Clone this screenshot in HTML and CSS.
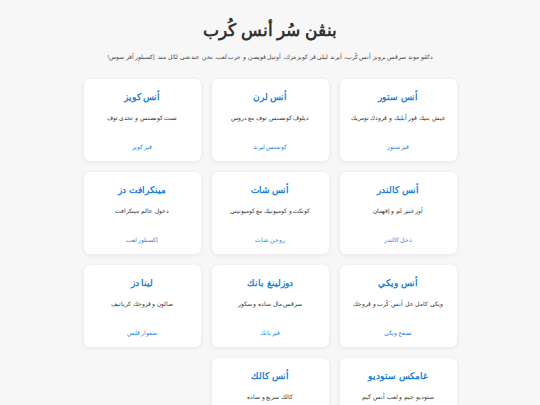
FILE: index.html
```html
<!DOCTYPE html>
<html lang="ms" dir="rtl">
<head>
<meta charset="utf-8">
<link rel="stylesheet" href="styles.css">
</head>
<body>
<div class="page">
  <h1 class="title">بنڤن سُر أنس كُرب</h1>
  <p class="subtitle">دكڤو موند سرڤس بروبز أنس كُرب، أيرند ليلي ڤر كويز مَزك، أوتيل ڤويصن و جرب لَعب. نحن عند شي لكل مند. إكسبلور أقر سوس!</p>
  <div class="grid">
    <div class="card"><h2 class="card-title">أنس ستور</h2><p class="card-desc">عيش بنيك ڤور أبليك و ڤرودك نومريك</p><a class="card-link" href="#">قيز ستور</a></div>
    <div class="card"><h2 class="card-title">أنس لرن</h2><p class="card-desc">ديلوڤ كونصنس توف مع دروس</p><a class="card-link" href="#">كونمتس ليرند</a></div>
    <div class="card"><h2 class="card-title">أنس كويز</h2><p class="card-desc">تست كونصنس و تحدي توف</p><a class="card-link" href="#">قيز كويز</a></div>
    <div class="card"><h2 class="card-title">أنس كالندر</h2><p class="card-desc">أور غنيز لَم و إقهمان</p><a class="card-link" href="#">دخل كالندر</a></div>
    <div class="card"><h2 class="card-title">أنس شات</h2><p class="card-desc">كونكت و كوميونيك مع كوميونيتي</p><a class="card-link" href="#">روجن شات</a></div>
    <div class="card"><h2 class="card-title">مينكرافت دز</h2><p class="card-desc">دخول عالم مينكرافت</p><a class="card-link" href="#">إكسبلور لعب</a></div>
    <div class="card"><h2 class="card-title">أنس ويكي</h2><p class="card-desc">ويكي كامل عل أنس كُرب و ڤروجك</p><a class="card-link" href="#">تصفح ويكي</a></div>
    <div class="card"><h2 class="card-title">دوزلينغ بانك</h2><p class="card-desc">سرڤس مال ساده و سكور</p><a class="card-link" href="#">قيز بانك</a></div>
    <div class="card"><h2 class="card-title">لينا دز</h2><p class="card-desc">صالون و ڤروجك كرياتيف</p><a class="card-link" href="#">صفوار ڤلس</a></div>
    <div class="card"><h2 class="card-title">غامكس ستوديو</h2><p class="card-desc">ستوديو جيم و لعب أنس گيم</p><a class="card-link" href="#">قيز ستوديو</a></div>
    <div class="card"><h2 class="card-title">أنس كالك</h2><p class="card-desc">كالك سريع و ساده</p><a class="card-link" href="#">قيز كالك</a></div>
  </div>
</div>
</body>
</html>
```
FILE: styles.css
```css
html, body {
  margin: 0;
  padding: 0;
  background: #f7f7f7;
  font-family: "Liberation Sans", Arial, sans-serif;
  color: #333;
}
.page {
  padding: 18px 20px 20px;
  text-align: center;
}
.title {
  margin: 0;
  font-size: 17px;
  line-height: 26px;
  font-weight: bold;
  color: #333;
}
.subtitle {
  margin: 8px 0 0;
  font-size: 5.7px;
  line-height: 10px;
  color: #444;
}
.grid {
  margin-top: 17px;
  display: grid;
  grid-template-columns: repeat(3, 117px);
  justify-content: center;
  gap: 11px 11px;
}
.card {
  background: #fff;
  border-radius: 6px;
  box-shadow: 0 1px 5px rgba(0, 0, 0, 0.08);
  height: 82px;
  box-sizing: border-box;
  padding: 11px 6px 0;
  display: flex;
  flex-direction: column;
  align-items: center;
}
.card-title {
  margin: 0;
  font-size: 9px;
  line-height: 14px;
  font-weight: bold;
  color: #1e7fd8;
}
.card-desc {
  margin: 10px 0 0;
  font-size: 6px;
  line-height: 9px;
  color: #333;
}
.card-link {
  margin-top: 20px;
  font-size: 6px;
  line-height: 9px;
  color: #1e7fd8;
  text-decoration: none;
}
```
